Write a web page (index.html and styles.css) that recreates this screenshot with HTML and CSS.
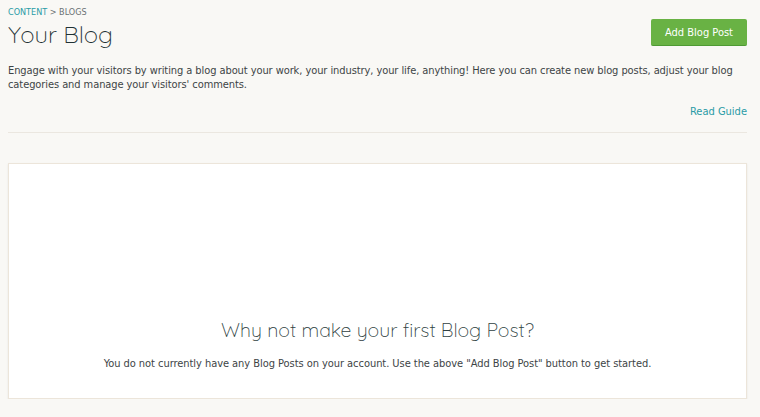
FILE: index.html
```html
<!DOCTYPE html>
<html lang="en">
<head>
    <meta charset="utf-8">
    <title>Your Blog</title>
    <link rel="stylesheet" href="styles.css">
</head>
<body>
    <div class="page">
        <div class="top">
            <div class="titles">
                <div class="crumbs"><a href="#">Content</a> &gt; Blogs</div>
                <h1>Your Blog</h1>
            </div>
            <button class="bgrn">Add Blog Post</button>
        </div>
        <p class="intro">Engage with your visitors by writing a blog about your work, your industry, your life, anything! Here you can create new blog posts, adjust your blog categories and manage your visitors' comments.</p>
        <div class="guide"><a href="#">Read Guide</a></div>
        <hr>
        <div class="card">
            <h2>Why not make your first Blog Post?</h2>
            <p>You do not currently have any Blog Posts on your account. Use the above "Add Blog Post" button to get started.</p>
        </div>
    </div>
</body>
</html>
```
FILE: styles.css
```css
html,
body {
    margin: 0;
    background-color: #f9f8f5;
}

body {
    font-family: "DejaVu Sans Condensed", "DejaVu Sans", Verdana, sans-serif;
    font-size: 11px;
    color: #3d4446;
}

a {
    color: #2a9ba6;
    text-decoration: none;
}

.page {
    padding: 0 13px 0 8px;
}

.top {
    display: flex;
    justify-content: space-between;
    align-items: flex-start;
}

.crumbs {
    padding-top: 7px;
    font-size: 9px;
    text-transform: uppercase;
    color: #6b7173;
}

h1 {
    margin: 2px 0 0;
    font-family: "Quicksand", "Lato", sans-serif;
    font-weight: 300;
    font-size: 24px;
    line-height: 30px;
    color: #1f3134;
}

button {
    margin-top: 19px;
    width: 96px;
    height: 27px;
    border: 0;
    border-bottom: 1px solid #4f9a34;
    border-radius: 2px;
    background-color: #69b244;
    color: #fff;
    font-family: "DejaVu Sans Condensed", "DejaVu Sans", Verdana, sans-serif;
    font-size: 11px;
    cursor: pointer;
}

.intro {
    margin: 15px 0 0;
    line-height: 14px;
    letter-spacing: -0.08px;
}

.guide {
    margin-top: 13px;
    text-align: right;
}

hr {
    margin: 14px 0 30px;
    border: 0;
    border-top: 1px solid #ebe7e0;
}

.card {
    height: 236px;
    box-sizing: border-box;
    padding-top: 153px;
    background-color: #fff;
    border: 1px solid #ece5da;
    box-shadow: 0 1px 2px rgba(0, 0, 0, 0.08);
    text-align: center;
}

.card h2 {
    margin: 0;
    font-family: "Quicksand", "Lato", sans-serif;
    font-weight: 300;
    font-size: 19.5px;
    color: #2f3f42;
}

.card p {
    margin: 15px 0 0;
    letter-spacing: -0.05px;
}
```
